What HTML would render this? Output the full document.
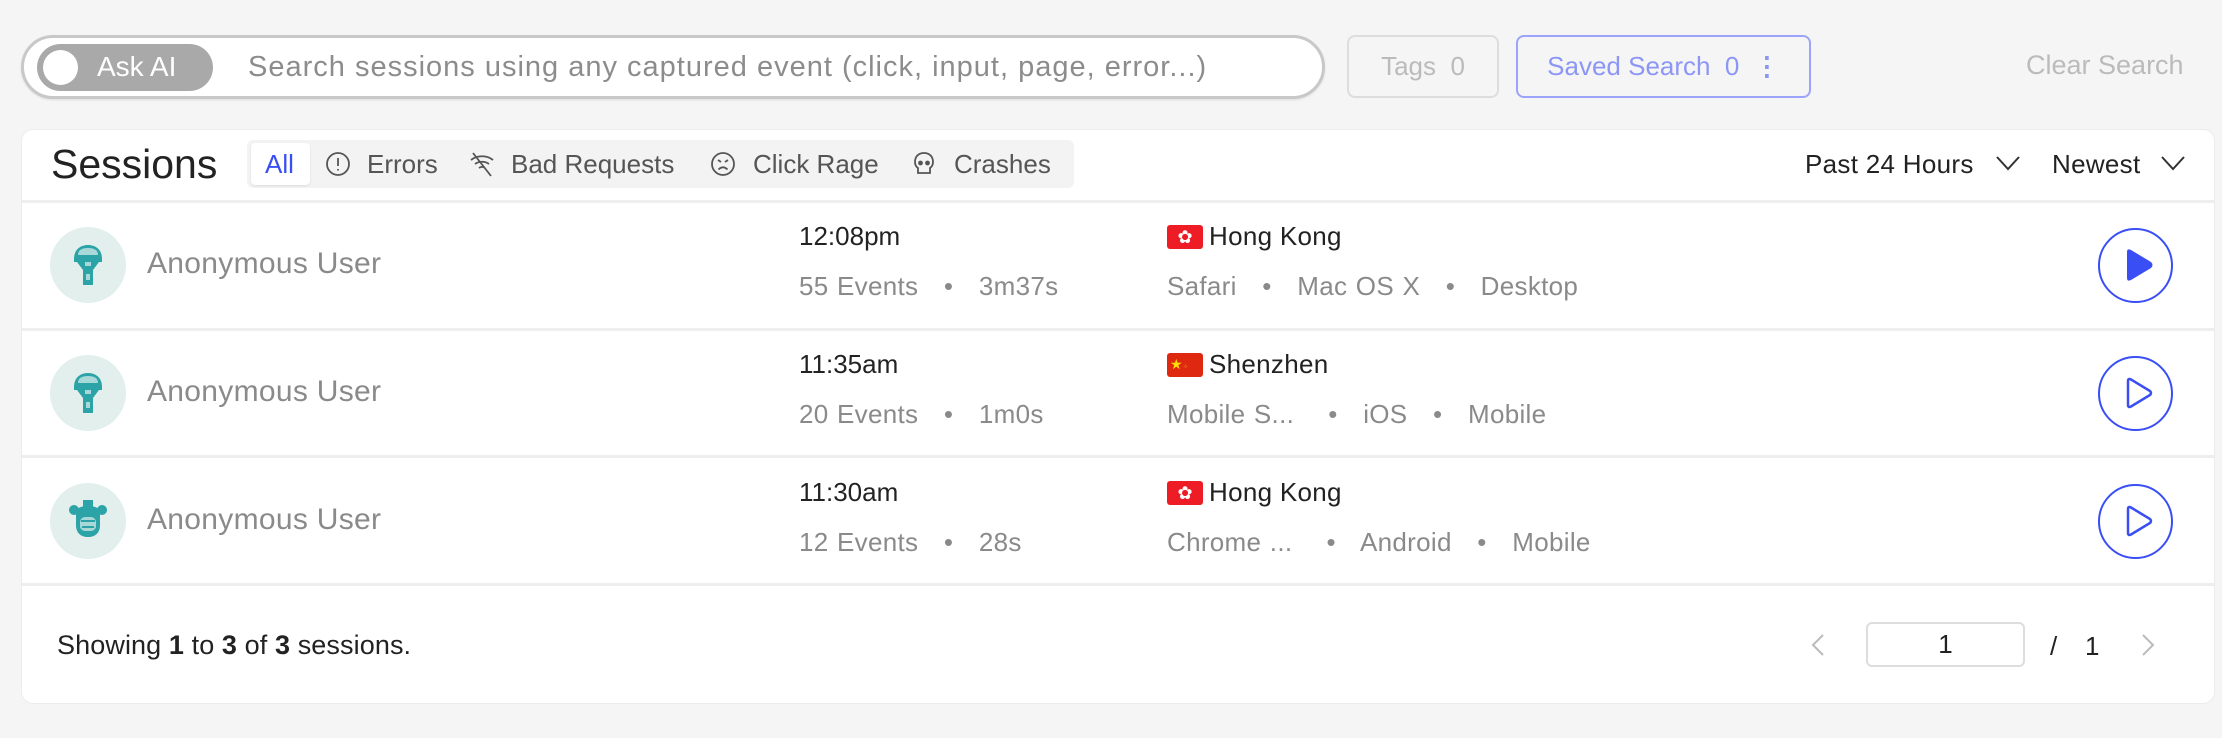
<!DOCTYPE html>
<html><head><meta charset="utf-8"><style>
*{box-sizing:border-box;margin:0;padding:0}
body{width:2222px;height:738px;background:#f5f5f5;font-family:"Liberation Sans",sans-serif;position:relative;overflow:hidden;color:#222}
.a{position:absolute;white-space:nowrap}
.search{left:21px;top:35px;width:1304px;height:64px;border:3px solid #c8c8c8;border-radius:32px;background:#fff;box-shadow:0 1px 2px rgba(0,0,0,.1)}
.toggle{left:37px;top:44px;width:176px;height:47px;border-radius:24px;background:#a9a9a9}
.knob{left:43px;top:50px;width:35px;height:35px;border-radius:50%;background:#fff}
.btn{height:63px;border-radius:8px;top:35px;font-size:26px;line-height:59px;text-align:center}
.card{left:21px;top:129px;width:2194px;height:575px;background:#fff;border:1px solid #ececec;border-radius:12px}
.sep{left:22px;width:2192px;height:3px;background:#eee}
.tabs{left:247px;top:140px;width:827px;height:48px;background:#f3f3f3;border-radius:6px}
.g{color:#8a8a8a}
.m{font-size:26px;letter-spacing:0.3px;word-spacing:1px}
.u{font-size:30px;letter-spacing:0.3px;left:147px}
.av{width:76px;height:76px;border-radius:50%;background:#e2efed;left:50px}
.play{width:75px;height:75px;border-radius:50%;border:2.5px solid #3a4ef5;left:2098px}
.flag{width:36px;height:24px;border-radius:3px;left:1167px}
</style></head><body>
<div class="a search"></div>
<div class="a toggle"></div>
<div class="a knob"></div>
<div class="a" style="left:97px;top:51px;color:#fff;font-size:28px">Ask AI</div>
<div class="a" style="left:248px;top:51px;font-size:29px;color:#8c8c8c;letter-spacing:1px">Search sessions using any captured event (click, input, page, error...)</div>
<div class="a btn" style="left:1347px;width:152px;border:2px solid #ddd;color:#bbb">Tags&nbsp;&nbsp;0</div>
<div class="a btn" style="left:1516px;width:295px;border:2px solid #9aa4fb;color:#8c96f5">Saved Search&nbsp;&nbsp;0 &nbsp;<b>⋮</b></div>
<div class="a" style="left:2026px;top:50px;font-size:27px;color:#bbb">Clear Search</div>

<div class="a card"></div>
<div class="a" style="left:51px;top:141px;font-size:41px">Sessions</div>
<div class="a tabs"></div>
<div class="a" style="left:251px;top:143px;width:59px;height:42px;background:#fff;border-radius:4px;box-shadow:0 1px 2px rgba(0,0,0,.1)"></div>
<div class="a" style="left:265px;top:149px;font-size:26px;color:#3a4ef5">All</div>
<svg class="a" style="left:325px;top:151px" width="26" height="26" viewBox="0 0 26 26" fill="none" stroke="#555" stroke-width="1.8"><circle cx="13" cy="13" r="11"/><path d="M13 7v8M13 18v1.5"/></svg>
<div class="a" style="left:367px;top:149px;font-size:26px;color:#555">Errors</div>
<svg class="a" style="left:468px;top:150px" width="28" height="28" viewBox="0 0 28 28" fill="none" stroke="#555" stroke-width="1.8"><path d="M3 10c6-5 16-5 22 0M7 14c4-3 10-3 14 0M11 18c2-1.5 4-1.5 6 0M5 3l18 23"/></svg>
<div class="a" style="left:511px;top:149px;font-size:26px;color:#555">Bad Requests</div>
<svg class="a" style="left:710px;top:151px" width="26" height="26" viewBox="0 0 26 26" fill="none" stroke="#555" stroke-width="1.8"><circle cx="13" cy="13" r="11"/><path d="M8 9l3 2M18 9l-3 2M8.5 18.5c3-3 6-3 9 0"/></svg>
<div class="a" style="left:753px;top:149px;font-size:26px;color:#555">Click Rage</div>
<svg class="a" style="left:912px;top:151px" width="24" height="26" viewBox="0 0 24 26" fill="none" stroke="#555" stroke-width="1.8"><path d="M12 2C6 2 3 6 3 11c0 3 1.5 5 3 6v5h12v-5c1.5-1 3-3 3-6 0-5-3-9-9-9z"/><circle cx="8.5" cy="12" r="1.5" fill="#555"/><circle cx="15.5" cy="12" r="1.5" fill="#555"/></svg>
<div class="a" style="left:954px;top:149px;font-size:26px;color:#555">Crashes</div>
<div class="a" style="left:1805px;top:149px;font-size:26px;letter-spacing:0.3px">Past 24 Hours</div>
<svg class="a" style="left:1995px;top:155px" width="26" height="16" viewBox="0 0 26 16" fill="none" stroke="#333" stroke-width="2"><path d="M2 2l11 12L24 2"/></svg>
<div class="a" style="left:2052px;top:149px;font-size:26px;letter-spacing:0.3px">Newest</div>
<svg class="a" style="left:2160px;top:155px" width="26" height="16" viewBox="0 0 26 16" fill="none" stroke="#333" stroke-width="2"><path d="M2 2l11 12L24 2"/></svg>

<div class="a sep" style="top:200px"></div>
<div class="a sep" style="top:328px"></div>
<div class="a sep" style="top:455px"></div>
<div class="a sep" style="top:583px"></div>

<!-- row 1 -->
<div class="a av" style="top:227px"></div>
<svg class="a" style="left:73px;top:245px" width="30" height="40" viewBox="0 0 30 40"><path d="M1 14C1 4 8 0 15 0s14 4 14 14v3H1z" fill="#2ba3a7"/><path d="M5 10c0-5 4-7 10-7s10 2 10 7z" fill="#a8d8d8"/><path d="M4 17h22l-6 8v15H10V25z" fill="#2ba3a7"/><rect x="12" y="17" width="6" height="4" fill="#a8d8d8"/><rect x="13" y="29" width="4" height="6" fill="#a8d8d8"/></svg>
<div class="a g u" style="top:247px">Anonymous User</div>
<div class="a" style="left:799px;top:221px;font-size:26px">12:08pm</div>
<div class="a g m" style="left:799px;top:271px">55 Events &nbsp;&nbsp;•&nbsp;&nbsp; 3m37s</div>
<div class="a flag" style="top:225px;background:#ee1c25;color:#fff;font-size:18px;text-align:center;line-height:24px">✿</div>
<div class="a" style="left:1209px;top:221px;font-size:26px;letter-spacing:0.3px">Hong Kong</div>
<div class="a g m" style="left:1167px;top:271px">Safari &nbsp;&nbsp;•&nbsp;&nbsp; Mac OS X &nbsp;&nbsp;•&nbsp;&nbsp; Desktop</div>
<div class="a play" style="top:228px"></div>
<svg class="a" style="left:2124px;top:248px" width="30" height="34" viewBox="0 0 30 34"><path d="M3 4Q3 0 7 2L27 14Q30 17 27 20L7 32Q3 34 3 30z" fill="#3a4ef5"/></svg>

<!-- row 2 -->
<div class="a av" style="top:355px"></div>
<svg class="a" style="left:73px;top:373px" width="30" height="40" viewBox="0 0 30 40"><path d="M1 14C1 4 8 0 15 0s14 4 14 14v3H1z" fill="#2ba3a7"/><path d="M5 10c0-5 4-7 10-7s10 2 10 7z" fill="#a8d8d8"/><path d="M4 17h22l-6 8v15H10V25z" fill="#2ba3a7"/><rect x="12" y="17" width="6" height="4" fill="#a8d8d8"/><rect x="13" y="29" width="4" height="6" fill="#a8d8d8"/></svg>
<div class="a g u" style="top:375px">Anonymous User</div>
<div class="a" style="left:799px;top:349px;font-size:26px">11:35am</div>
<div class="a g m" style="left:799px;top:399px">20 Events &nbsp;&nbsp;•&nbsp;&nbsp; 1m0s</div>
<div class="a flag" style="top:353px;background:#de2910;color:#ffde00;font-size:14px;line-height:22px;padding-left:3px">★<span style="font-size:7px">⁘</span></div>
<div class="a" style="left:1209px;top:349px;font-size:26px;letter-spacing:0.3px">Shenzhen</div>
<div class="a g m" style="left:1167px;top:399px">Mobile S... &nbsp;&nbsp;&nbsp;•&nbsp;&nbsp; iOS &nbsp;&nbsp;•&nbsp;&nbsp; Mobile</div>
<div class="a play" style="top:356px"></div>
<svg class="a" style="left:2124px;top:376px" width="30" height="34" viewBox="0 0 30 34" fill="none" stroke="#3a4ef5" stroke-width="2.5"><path d="M4 5Q4 2 7 3.5L26 15Q28 17 26 19L7 30.5Q4 32 4 29z"/></svg>

<!-- row 3 -->
<div class="a av" style="top:483px"></div>
<svg class="a" style="left:68px;top:499px" width="40" height="44" viewBox="0 0 40 44"><rect x="15" y="1" width="10" height="7" fill="#2ba3a7"/><circle cx="6" cy="11" r="5" fill="#2ba3a7"/><circle cx="34" cy="11" r="5" fill="#2ba3a7"/><path d="M8 14c0-5 5-7 12-7s12 2 12 7v12c0 8-5 12-12 12S8 34 8 26z" fill="#2ba3a7"/><rect x="12" y="18" width="16" height="14" rx="5" fill="#a8d8d8"/><path d="M13 22h14M14 28h12" stroke="#2ba3a7" stroke-width="2"/></svg>
<div class="a g u" style="top:503px">Anonymous User</div>
<div class="a" style="left:799px;top:477px;font-size:26px">11:30am</div>
<div class="a g m" style="left:799px;top:527px">12 Events &nbsp;&nbsp;•&nbsp;&nbsp; 28s</div>
<div class="a flag" style="top:481px;background:#ee1c25;color:#fff;font-size:18px;text-align:center;line-height:24px">✿</div>
<div class="a" style="left:1209px;top:477px;font-size:26px;letter-spacing:0.3px">Hong Kong</div>
<div class="a g m" style="left:1167px;top:527px">Chrome ... &nbsp;&nbsp;&nbsp;•&nbsp;&nbsp; Android &nbsp;&nbsp;•&nbsp;&nbsp; Mobile</div>
<div class="a play" style="top:484px"></div>
<svg class="a" style="left:2124px;top:504px" width="30" height="34" viewBox="0 0 30 34" fill="none" stroke="#3a4ef5" stroke-width="2.5"><path d="M4 5Q4 2 7 3.5L26 15Q28 17 26 19L7 30.5Q4 32 4 29z"/></svg>

<!-- footer -->
<div class="a" style="left:57px;top:630px;font-size:27px;letter-spacing:0.1px">Showing <b>1</b> to <b>3</b> of <b>3</b> sessions.</div>
<svg class="a" style="left:1810px;top:633px" width="16" height="24" viewBox="0 0 16 24" fill="none" stroke="#bbb" stroke-width="2"><path d="M13 2L3 12l10 10"/></svg>
<div class="a" style="left:1866px;top:622px;width:159px;height:45px;border:2px solid #ddd;border-radius:6px;text-align:center;font-size:26px;line-height:41px">1</div>
<div class="a" style="left:2050px;top:631px;font-size:26px">/</div>
<div class="a" style="left:2085px;top:631px;font-size:26px">1</div>
<svg class="a" style="left:2140px;top:633px" width="16" height="24" viewBox="0 0 16 24" fill="none" stroke="#bbb" stroke-width="2"><path d="M3 2l10 10L3 22"/></svg>
</body></html>
